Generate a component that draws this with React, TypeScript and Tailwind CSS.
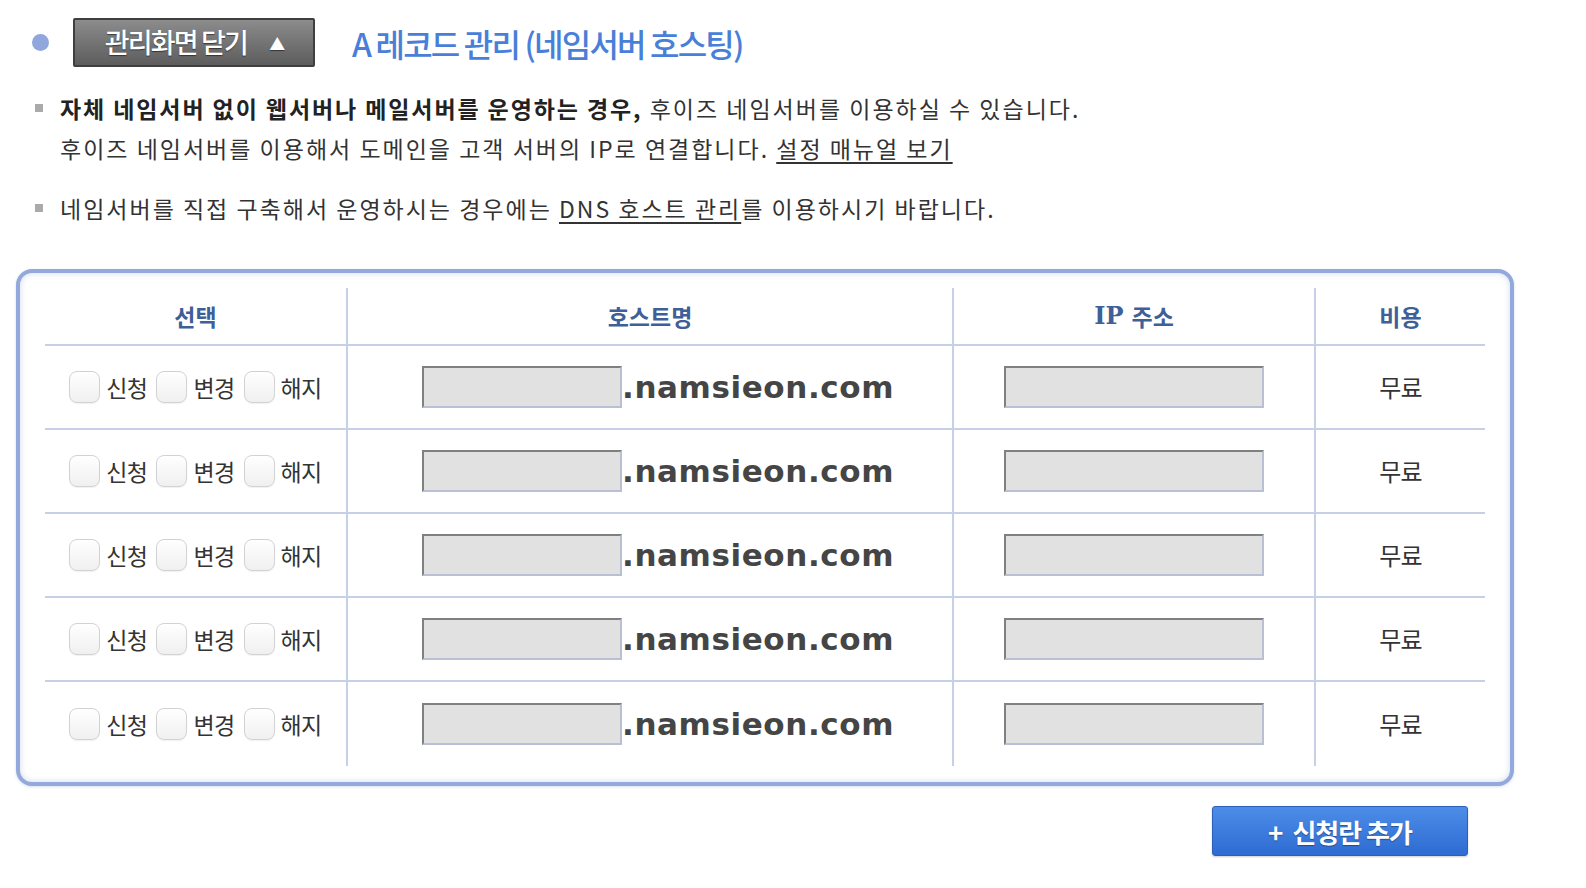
import React from "react";

const KR = "font-['Noto_Sans_CJK_KR','Noto_Sans',sans-serif]";

function Check({ label }: { label: string }) {
  return (
    <label className="flex items-center">
      <span className="w-[31px] h-[32px] rounded-[8px] border border-[#d2d2d2] bg-gradient-to-b from-white to-[#f0f0f0] shadow-[0_1px_1px_rgba(0,0,0,0.06)]" />
      <span className="ml-[6px] text-[23px] leading-none tracking-[-0.6px] text-[#333]">{label}</span>
    </label>
  );
}

function GrayInput({ w }: { w: string }) {
  return (
    <span
      className={`${w} h-[42px] bg-[#e1e1e1] border-2 border-t-[#808080] border-l-[#808080] border-b-[#b9c0d6] border-r-[#b9c0d6]`}
    />
  );
}

function Row({ last }: { last: boolean }) {
  const bb = last ? "" : "border-b-2 border-[#c6d0e6]";
  return (
    <>
      <div className={`h-[84px] flex items-center justify-center gap-[9px] ${bb}`}>
        <Check label="신청" />
        <Check label="변경" />
        <Check label="해지" />
      </div>
      <div className={`h-[84px] flex items-center pl-[74px] border-l-2 border-[#c6d0e6] ${bb}`}>
        <GrayInput w="w-[200px]" />
        <span className="font-['DejaVu_Sans',sans-serif] font-bold text-[31px] leading-none text-[#454545] tracking-[0.6px]">
          .namsieon.com
        </span>
      </div>
      <div className={`h-[84px] flex items-center justify-center border-l-2 border-[#c6d0e6] ${bb}`}>
        <GrayInput w="w-[260px]" />
      </div>
      <div className={`h-[84px] flex items-center justify-center border-l-2 border-[#c6d0e6] ${bb}`}>
        <span className="text-[24px] leading-none tracking-[-0.8px] text-[#333]">무료</span>
      </div>
    </>
  );
}

export default function App() {
  const rows = [0, 1, 2, 3, 4];
  const head = "h-[58px] flex items-center justify-center border-b-2 border-[#c6d0e6] text-[23px] font-bold text-[#3f5f98]";
  return (
    <div className={`w-[1586px] h-[888px] bg-white overflow-hidden ${KR}`}>
      {/* title bar */}
      <div className="flex items-center pt-[18px]">
        <span className="ml-[32px] w-[17px] h-[17px] rounded-full bg-[#8fa7dd]" />
        <button className="ml-[24px] w-[242px] h-[49px] flex items-center justify-center rounded-[2px] border-2 border-[#3f3f3f] bg-gradient-to-b from-[#8c8c8c] to-[#5d5d5d] text-white text-[27px] font-medium tracking-[-1.8px] [text-shadow:0_1px_1px_rgba(0,0,0,0.5)]">
          관리화면 닫기
          <span className="ml-[22px] text-[16px]">▲</span>
        </button>
        <h1 className="ml-[37px] text-[32px] font-medium tracking-[-1.8px] text-[#4a7fd9] leading-none">
          A 레코드 관리 (네임서버 호스팅)
        </h1>
      </div>

      {/* notes */}
      <ul className="mt-[21px] ml-[35px] text-[23px] leading-[40px] text-[#333] tracking-[2px]">
        <li className="flex">
          <span className="mt-[16px] w-[8px] h-[8px] bg-[#aaaaaa] shrink-0" />
          <div className="ml-[17px]">
            <div>
              <b className="text-[#222] tracking-[1.9px]">자체 네임서버 없이 웹서버나 메일서버를 운영하는 경우,</b> 후이즈 네임서버를 이용하실 수 있습니다.
            </div>
            <div>
              후이즈 네임서버를 이용해서 도메인을 고객 서버의 IP로 연결합니다. <a className="underline underline-offset-4">설정 매뉴얼 보기</a>
            </div>
          </div>
        </li>
        <li className="flex mt-[20px]">
          <span className="mt-[16px] w-[8px] h-[8px] bg-[#aaaaaa] shrink-0" />
          <div className="ml-[17px]">
            네임서버를 직접 구축해서 운영하시는 경우에는 <a className="underline underline-offset-4">DNS 호스트 관리</a>를 이용하시기 바랍니다.
          </div>
        </li>
      </ul>

      {/* table box */}
      <div className="mt-[41px] ml-[16px] w-[1498px] h-[517px] rounded-[16px] border-4 border-[#93a9db] bg-white shadow-[inset_0_0_6px_rgba(120,145,200,0.35),0_1px_3px_rgba(120,145,200,0.3)] pt-[15px] px-[25px]">
        <div className="grid grid-cols-[301px_606px_362px_171px]">
          <div className={head}>선택</div>
          <div className={`${head} border-l-2`}>호스트명</div>
          <div className={`${head} border-l-2`}>
            <span className="font-['DejaVu_Serif',serif] font-bold text-[24px] mr-[8px]">IP</span>주소
          </div>
          <div className={`${head} border-l-2`}>비용</div>
          {rows.map((r) => (
            <Row key={r} last={r === rows.length - 1} />
          ))}
        </div>
      </div>

      {/* add button */}
      <div className="w-[1468px] flex justify-end mt-[20px]">
        <button className="w-[256px] h-[50px] flex items-center justify-center rounded-[3px] border border-[#2b5fb8] bg-gradient-to-b from-[#4d8de8] to-[#2e6bd2] text-white text-[26px] font-bold tracking-[-1px] [text-shadow:0_1px_1px_rgba(0,0,0,0.35)] shadow-[0_1px_2px_rgba(0,0,0,0.2)]">
          <span className="mr-[10px]">+</span>신청란 추가
        </button>
      </div>
    </div>
  );
}
